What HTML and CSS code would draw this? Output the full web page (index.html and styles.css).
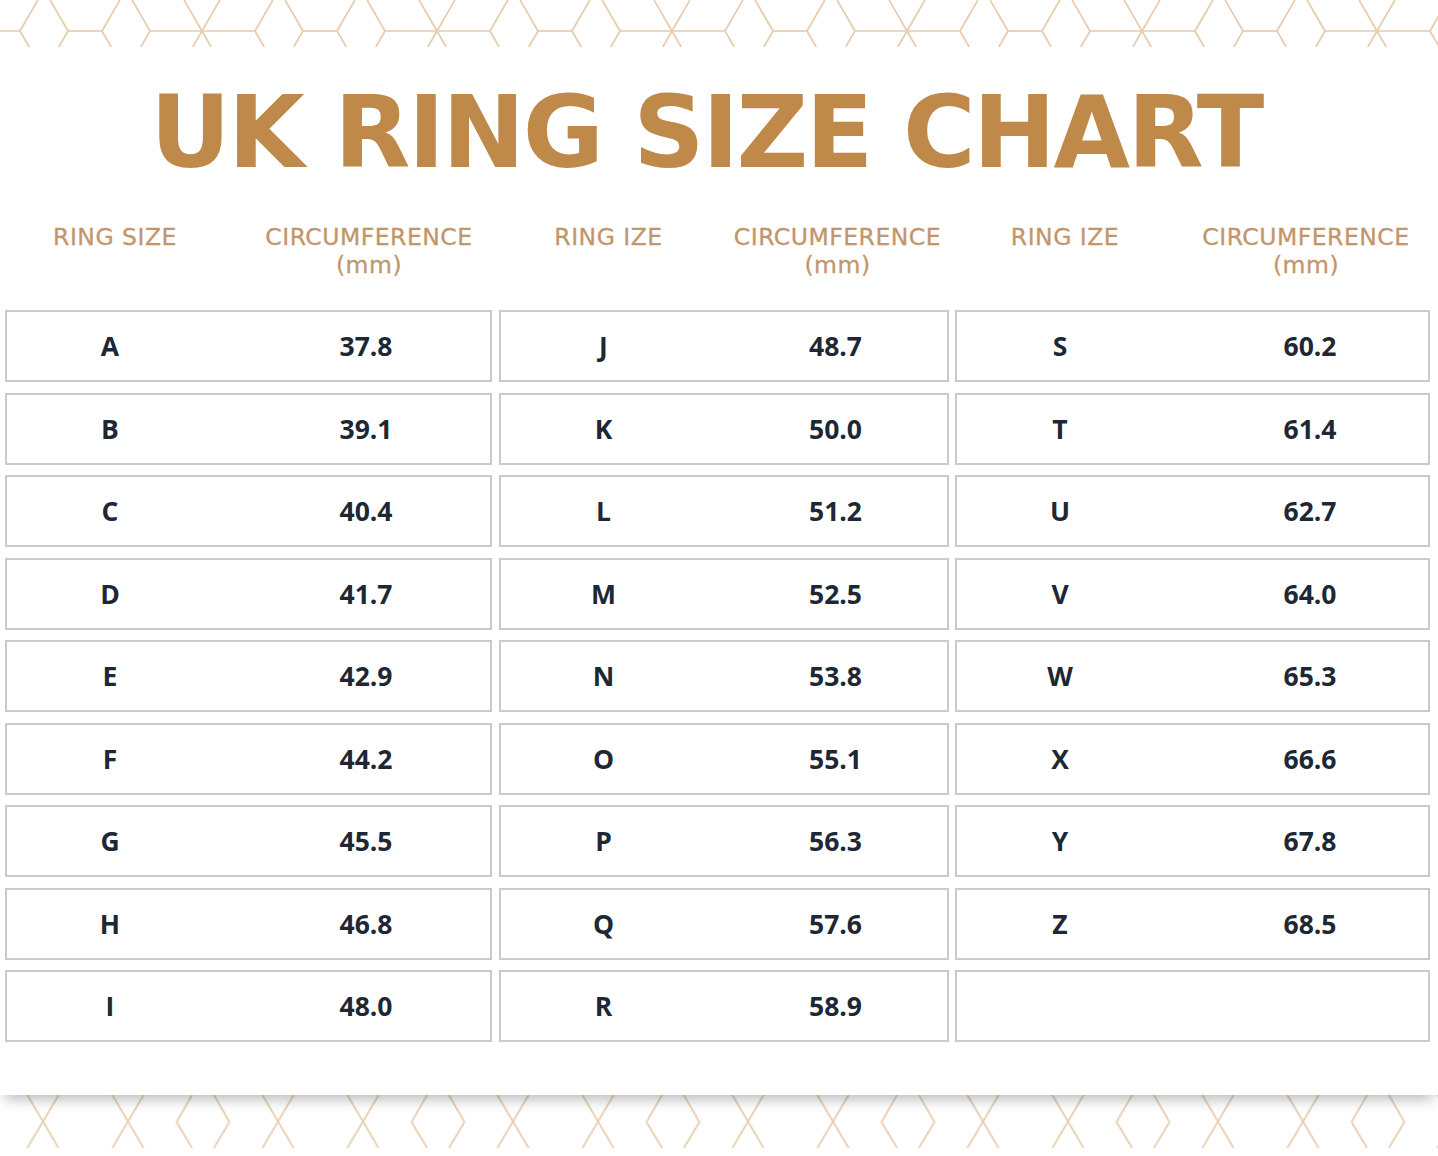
FILE: index.html
```html
<!DOCTYPE html>
<html lang="en">
<head>
<meta charset="utf-8">
<title>UK Ring Size Chart</title>
<link rel="stylesheet" href="styles.css">
</head>
<body>
<div class="strip strip-top">
  <svg class="pattern" width="1438" height="47" viewBox="0 0 1438 47" aria-hidden="true">
    <defs>
      <pattern id="hexTop" x="84" y="0" width="235" height="47" patternUnits="userSpaceOnUse">
        <g class="lines">
          <line x1="66" y1="31" x2="171" y2="31"/>
          <line x1="219" y1="31" x2="236" y2="31"/>
          <line x1="-1" y1="31" x2="18" y2="31"/>
          <line x1="100.1" y1="0" x2="127.2" y2="47"/>
          <line x1="135.9" y1="0" x2="108.8" y2="47"/>
          <line x1="171" y1="31" x2="188.9" y2="0"/>
          <line x1="171" y1="31" x2="180.2" y2="47"/>
          <line x1="219" y1="31" x2="201.1" y2="0"/>
          <line x1="219" y1="31" x2="209.8" y2="47"/>
          <line x1="18" y1="31" x2="35.9" y2="0"/>
          <line x1="18" y1="31" x2="27.2" y2="47"/>
          <line x1="66" y1="31" x2="48.1" y2="0"/>
          <line x1="66" y1="31" x2="56.8" y2="47"/>
        </g>
      </pattern>
    </defs>
    <rect x="0" y="0" width="1438" height="47" fill="url(#hexTop)"/>
  </svg>
</div>

<main class="card">
  <h1 class="title">UK RING SIZE CHART</h1>
  <div class="chart">
    <section class="group g1">
      <div class="head"><span class="hc-size">RING SIZE</span><span class="hc-mm">CIRCUMFERENCE<br>(mm)</span></div>
      <div class="row"><span class="size">A</span><span class="mm">37.8</span></div>
      <div class="row"><span class="size">B</span><span class="mm">39.1</span></div>
      <div class="row"><span class="size">C</span><span class="mm">40.4</span></div>
      <div class="row"><span class="size">D</span><span class="mm">41.7</span></div>
      <div class="row"><span class="size">E</span><span class="mm">42.9</span></div>
      <div class="row"><span class="size">F</span><span class="mm">44.2</span></div>
      <div class="row"><span class="size">G</span><span class="mm">45.5</span></div>
      <div class="row"><span class="size">H</span><span class="mm">46.8</span></div>
      <div class="row"><span class="size">I</span><span class="mm">48.0</span></div>
    </section>
    <section class="group g2">
      <div class="head"><span class="hc-size">RING IZE</span><span class="hc-mm">CIRCUMFERENCE<br>(mm)</span></div>
      <div class="row"><span class="size">J</span><span class="mm">48.7</span></div>
      <div class="row"><span class="size">K</span><span class="mm">50.0</span></div>
      <div class="row"><span class="size">L</span><span class="mm">51.2</span></div>
      <div class="row"><span class="size">M</span><span class="mm">52.5</span></div>
      <div class="row"><span class="size">N</span><span class="mm">53.8</span></div>
      <div class="row"><span class="size">O</span><span class="mm">55.1</span></div>
      <div class="row"><span class="size">P</span><span class="mm">56.3</span></div>
      <div class="row"><span class="size">Q</span><span class="mm">57.6</span></div>
      <div class="row"><span class="size">R</span><span class="mm">58.9</span></div>
    </section>
    <section class="group g3">
      <div class="head"><span class="hc-size">RING IZE</span><span class="hc-mm">CIRCUMFERENCE<br>(mm)</span></div>
      <div class="row"><span class="size">S</span><span class="mm">60.2</span></div>
      <div class="row"><span class="size">T</span><span class="mm">61.4</span></div>
      <div class="row"><span class="size">U</span><span class="mm">62.7</span></div>
      <div class="row"><span class="size">V</span><span class="mm">64.0</span></div>
      <div class="row"><span class="size">W</span><span class="mm">65.3</span></div>
      <div class="row"><span class="size">X</span><span class="mm">66.6</span></div>
      <div class="row"><span class="size">Y</span><span class="mm">67.8</span></div>
      <div class="row"><span class="size">Z</span><span class="mm">68.5</span></div>
      <div class="row"><span class="size"></span><span class="mm"></span></div>
    </section>
  </div>
</main>

<div class="strip strip-bottom">
  <svg class="pattern" width="1438" height="53" viewBox="0 0 1438 53" aria-hidden="true">
    <defs>
      <pattern id="hexBottom" x="85.5" y="0" width="235" height="53" patternUnits="userSpaceOnUse">
        <g class="lines">
          <line x1="26.9" y1="0" x2="58.1" y2="53"/>
          <line x1="58.1" y1="0" x2="26.9" y2="53"/>
          <line x1="91" y1="27" x2="106.6" y2="0"/>
          <line x1="91" y1="27" x2="106.6" y2="53"/>
          <line x1="144" y1="27" x2="128.4" y2="0"/>
          <line x1="144" y1="27" x2="128.4" y2="53"/>
          <line x1="176.9" y1="0" x2="208.1" y2="53"/>
          <line x1="208.1" y1="0" x2="176.9" y2="53"/>
        </g>
      </pattern>
    </defs>
    <rect x="0" y="0" width="1438" height="53" fill="url(#hexBottom)"/>
  </svg>
</div>
</body>
</html>
```

FILE: styles.css
```css
* {
  box-sizing: border-box;
}

html, body {
  margin: 0;
  padding: 0;
  background: #ffffff;
}

body {
  width: 1438px;
  height: 1156px;
  overflow: hidden;
  font-family: "DejaVu Sans", "Liberation Sans", sans-serif;
}

.strip {
  position: relative;
  background: #ffffff;
}

.strip-top {
  height: 47px;
}

.strip-bottom {
  height: 61px;
}

.pattern {
  display: block;
}

.lines line {
  stroke: #e6cbad;
  stroke-width: 1.7;
  fill: none;
}

.card {
  position: relative;
  z-index: 2;
  background: #ffffff;
  height: 1048px;
  padding-top: 36px;
  box-shadow: 0 10px 12px -5px rgba(0, 0, 0, 0.25);
}

.title {
  margin: 0;
  padding-right: 26px;
  text-align: center;
  font-family: "DejaVu Sans", "Liberation Sans", sans-serif;
  font-weight: 700;
  font-size: 99px;
  line-height: 99px;
  letter-spacing: -2.5px;
  color: #bf894a;
  white-space: nowrap;
}

.chart {
  display: grid;
  grid-template-columns: 487px 450px 475px;
  column-gap: 6.5px;
  padding-left: 5px;
  margin-top: 41px;
}

.g1 { --pad: 29px; --hpad: 31px; }
.g2 { --pad: 18px; --hpad: 18px; }
.g3 { --pad: 29px; --hpad: 17px; }

.group {
  display: flex;
  flex-direction: column;
  gap: 10.5px;
}

.head {
  display: grid;
  grid-template-columns: 210px 1fr;
  align-items: start;
  height: 56px;
  margin-bottom: 20.5px;
  font-size: 23.5px;
  line-height: 28px;
  letter-spacing: 0.5px;
  color: #c2966a;
  text-align: center;
  white-space: nowrap;
  -webkit-text-stroke: 0.3px #c2966a;
}

.hc-size {
  padding-left: 10px;
}

.hc-mm {
  padding-left: var(--hpad);
}

.row {
  display: grid;
  grid-template-columns: 206px 1fr;
  align-items: center;
  height: 72px;
  border: 2px solid #cacaca;
  background: #ffffff;
  font-family: "Open Sans", "Liberation Sans", sans-serif;
  font-weight: 700;
  font-size: 26.5px;
  color: #1d2834;
  text-align: center;
}

.mm {
  padding-left: var(--pad);
}
```
